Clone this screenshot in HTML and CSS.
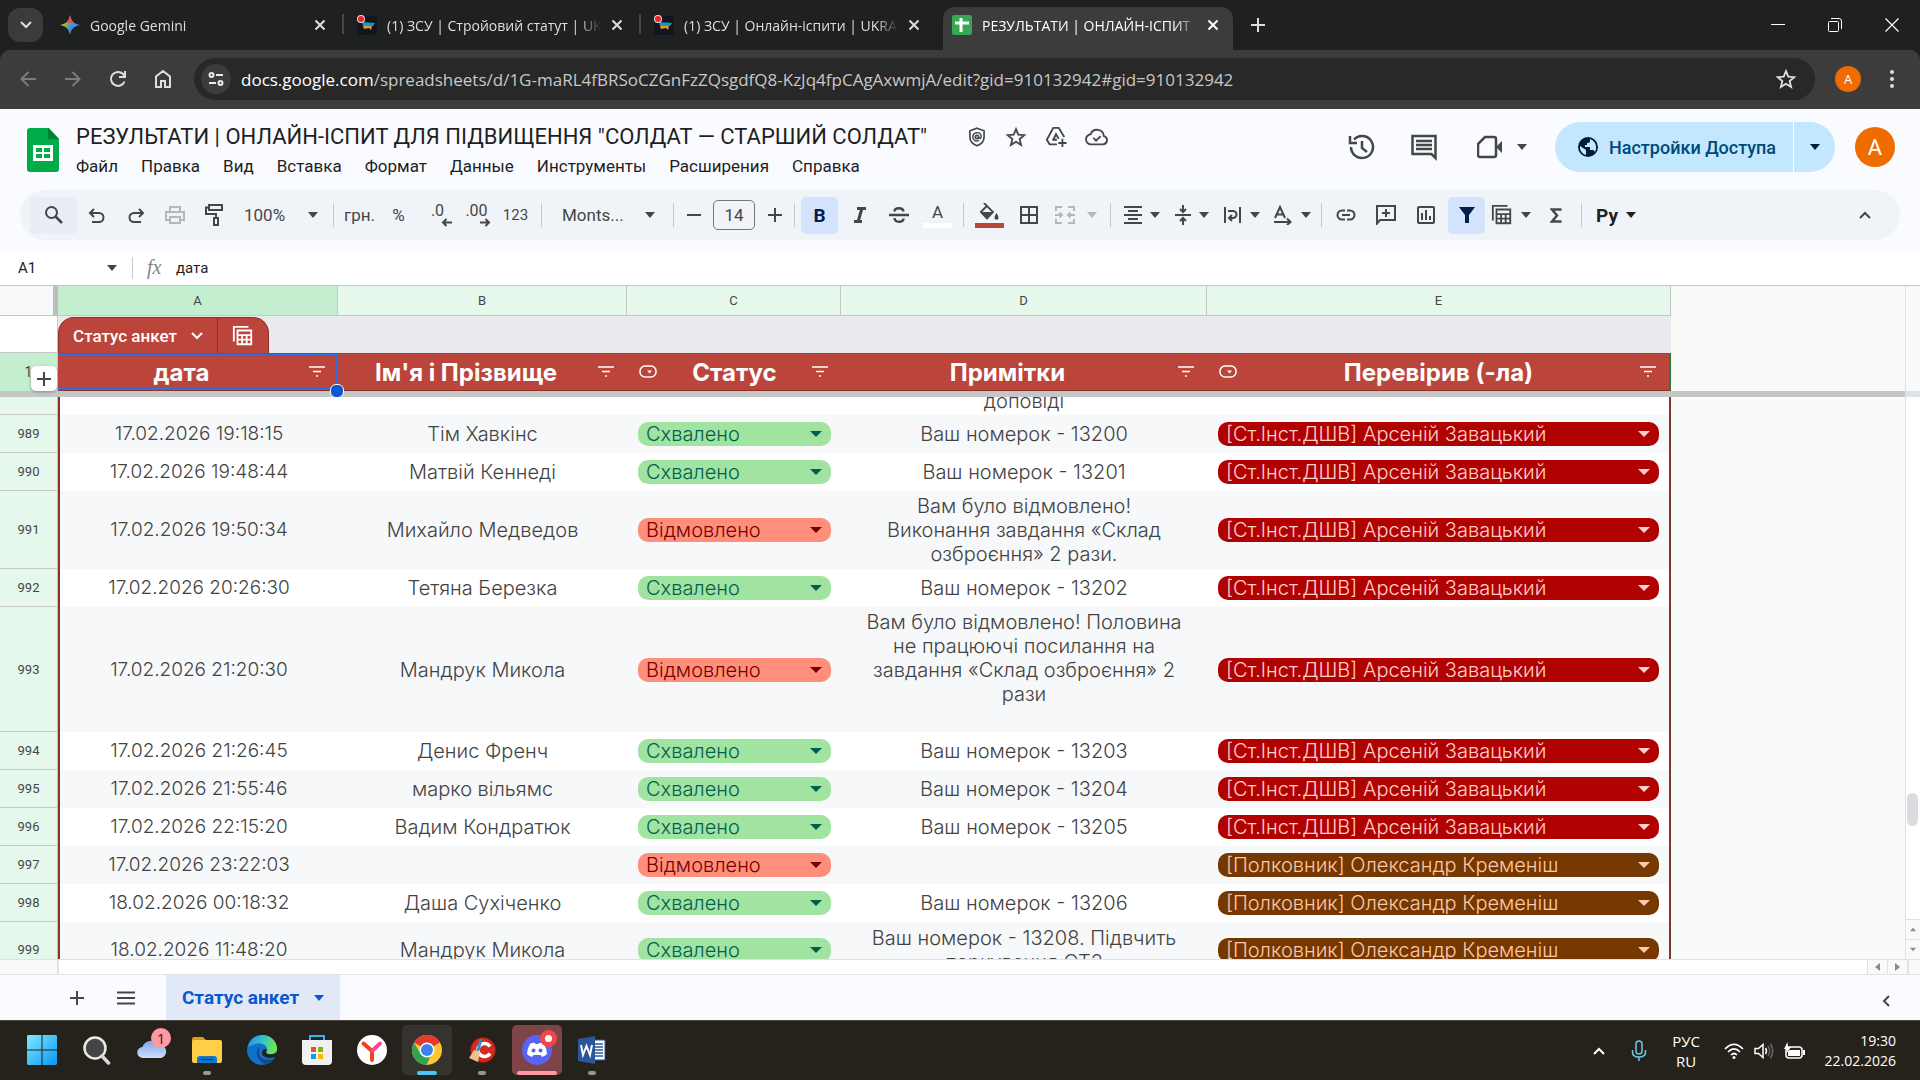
FILE: index.html
```html
<!DOCTYPE html>
<html lang="uk">
  <head>
    <meta charset="UTF-8" />
    <meta name="viewport" content="width=device-width, initial-scale=1.0" />
    <title>РЕЗУЛЬТАТИ | ОНЛАЙН-ІСПИТ</title>
    <link rel="stylesheet" href="styles.css" />
  </head>
  <body>
    <svg class="sprite" aria-hidden="true">
      <symbol id="i-close" viewBox="0 0 12 12"><path d="M1.500 1.500l9 9M10.500 1.500l-9 9" fill="none" stroke="currentColor" stroke-width="2" /></symbol>
      <symbol id="i-plus" viewBox="0 0 14 14"><path d="M7 0v14M0 7h14" fill="none" stroke="currentColor" stroke-width="2" /></symbol>
      <symbol id="i-minus" viewBox="0 0 14 14"><path d="M0 7h14" fill="none" stroke="currentColor" stroke-width="2" /></symbol>
      <symbol id="i-down" viewBox="0 0 12 8"><path d="M1 1l5 5 5-5" fill="none" stroke="currentColor" stroke-width="2" /></symbol>
      <symbol id="i-caret" viewBox="0 0 10 6"><path d="M0 0h10L5 6z" fill="currentColor" /></symbol>
      <symbol id="i-star" viewBox="0 0 24 24"><path d="M12 3.500l2.500 6 6.500.5-5 4.300 1.600 6.400-5.600-3.500-5.600 3.500L8 14.300 3 10l6.500-.5z" fill="none" stroke="currentColor" stroke-width="2" /></symbol>
      <symbol id="i-filter" viewBox="0 0 16 12"><path d="M0 1h16M4 5.500h8M7 10h2" fill="none" stroke="currentColor" stroke-width="1.500" /></symbol>
      <symbol id="i-chip" viewBox="0 0 18 14"><rect x="1" y="1" width="16" height="11" rx="5" fill="none" stroke="currentColor" stroke-width="1.500" /><path d="M8 5.500h5L10.500 8.500z" fill="currentColor" /></symbol>
      <symbol id="i-table" viewBox="0 0 24 24"><path d="M2 18V2h16M6 6h15v15H6zM6 11h15M6 16h15M11 11v10M16 11v10" fill="none" stroke="currentColor" stroke-width="2" /></symbol>
      <symbol id="i-emblem" viewBox="0 0 20 20"><rect y="1" width="20" height="19" rx="3" fill="#14161f" /><path d="M5 7l13 1-2 3H6z" fill="#1597cf" /><path d="M6 11h9l-1 4-2-2-5 1z" fill="#e09a1c" /><circle cx="4" cy="4" r="4" fill="#f3d4d2" /><circle cx="4" cy="4" r="3" fill="#e5252a" /></symbol>
    </svg>

    <header class="browser">
      <div class="tabstrip">
        <button class="tab-search" aria-label="Пошук вкладок"><svg width="12" height="8"><use href="#i-down" /></svg></button>
        <div class="tab">
          <svg width="20" height="20" viewBox="0 0 20 20"><defs><linearGradient id="gem" x1="0" y1="0.300" x2="1" y2="0.600"><stop offset="0.100" stop-color="#f6bc05" /><stop offset="0.400" stop-color="#5db86b" /><stop offset="0.600" stop-color="#3f8cf5" /></linearGradient></defs><path d="M10 0c1 6 4 9 10 10-6 1-9 4-10 10-1-6-4-9-10-10 6-1 9-4 10-10z" fill="url(#gem)" /><path d="M10 0c.5 4 2 6 4 7.500L8 8 6.500 7C9 5 9.500 3 10 0z" fill="#ea4e55" /></svg>
          <span class="tab-name">Google Gemini</span>
          <button aria-label="Закрити"><svg width="12" height="12"><use href="#i-close" /></svg></button>
        </div>
        <div class="tab divided">
          <svg width="20" height="20"><use href="#i-emblem" /></svg>
          <span class="tab-name">(1) ЗСУ | Стройовий статут | UKRAINE</span>
          <button aria-label="Закрити"><svg width="12" height="12"><use href="#i-close" /></svg></button>
        </div>
        <div class="tab divided">
          <svg width="20" height="20"><use href="#i-emblem" /></svg>
          <span class="tab-name">(1) ЗСУ | Онлайн-іспити | UKRAINE</span>
          <button aria-label="Закрити"><svg width="12" height="12"><use href="#i-close" /></svg></button>
        </div>
        <div class="tab current">
          <svg width="20" height="20" viewBox="0 0 20 20"><rect width="20" height="20" rx="2" fill="#34a853" /><path d="M9 3v14M3 8h14" stroke="#fff" stroke-width="3" /></svg>
          <span class="tab-name">РЕЗУЛЬТАТИ | ОНЛАЙН-ІСПИТ</span>
          <button aria-label="Закрити"><svg width="12" height="12"><use href="#i-close" /></svg></button>
        </div>
        <button class="new-tab" aria-label="Нова вкладка"><svg width="14" height="14"><use href="#i-plus" /></svg></button>
        <div class="window-controls">
          <button aria-label="Згорнути"><svg width="14" height="14" viewBox="0 0 14 14"><path d="M0 6.500h14" stroke="#fff" /></svg></button>
          <button aria-label="Відновити"><svg width="14" height="14" viewBox="0 0 14 14" fill="none" stroke="#fff"><rect x="0.500" y="3.500" width="10" height="10" rx="1" /><path d="M3 .5h8q2.500 0 2.500 2.500v8" /></svg></button>
          <button aria-label="Закрити вікно"><svg width="14" height="14" viewBox="0 0 14 14"><path d="M.5.5l13 13M13.500.5l-13 13" stroke="#fff" stroke-width="1.200" /></svg></button>
        </div>
      </div>
      <div class="navbar">
        <button class="off" aria-label="Назад"><svg width="18" height="18" viewBox="0 0 18 18"><path d="M17 9H3M9.500 2L2.500 9l7 7" fill="none" stroke="currentColor" stroke-width="2" /></svg></button>
        <button class="off" aria-label="Вперед"><svg width="18" height="18" viewBox="0 0 18 18"><path d="M1 9h14M8.500 2l7 7-7 7" fill="none" stroke="currentColor" stroke-width="2" /></svg></button>
        <button aria-label="Оновити"><svg width="18" height="18" viewBox="0 0 18 18"><path d="M15.500 11.500A7 7 0 1 1 14 4l2 2M16 1v6h-6" fill="none" stroke="currentColor" stroke-width="2" /></svg></button>
        <button aria-label="Додому"><svg width="18" height="18" viewBox="0 0 18 18"><path d="M2 17V6.500L9 1l7 5.500V17h-5v-6H7v6z" fill="none" stroke="currentColor" stroke-width="2" /></svg></button>
        <div class="omnibox">
          <button class="site-info" aria-label="Дані сайту"><svg width="16" height="16" viewBox="0 0 16 16" fill="none" stroke="#e8e8e8" stroke-width="2"><circle cx="3.500" cy="4" r="2" /><path d="M8 4h7M1 12h7" /><circle cx="12.500" cy="12" r="2" /></svg></button>
          <p class="url"><b>docs.google.com</b>/spreadsheets/d/1G-maRL4fBRSoCZGnFzZQsgdfQ8-KzJq4fpCAgAxwmjA/edit?gid=910132942#gid=910132942</p>
          <button class="bookmark" aria-label="Закладка"><svg width="22" height="22"><use href="#i-star" /></svg></button>
        </div>
        <button class="profile" aria-label="Профіль">A</button>
        <button class="more" aria-label="Меню"><svg width="4" height="18" viewBox="0 0 4 18" fill="currentColor"><circle cx="2" cy="2" r="2" /><circle cx="2" cy="9" r="2" /><circle cx="2" cy="16" r="2" /></svg></button>
      </div>
    </header>

    <section class="doc-head">
      <svg class="logo" width="32" height="44" viewBox="0 0 32 44"><path d="M3 0h19l10 11v30q0 3-3 3H3q-3 0-3-3V3q0-3 3-3z" fill="#00ac47" /><path d="M21 0l11 11H21z" fill="#00832d" /><path d="M6 17h20v16H6zM9 20v4h6v-4zM17 20v4h6v-4zM9 26v4h6v-4zM17 26v4h6v-4z" fill="#fff" fill-rule="evenodd" /></svg>
      <div class="doc-info">
        <div class="doc-title">
          <h1>РЕЗУЛЬТАТИ | ОНЛАЙН-ІСПИТ ДЛЯ ПІДВИЩЕННЯ "СОЛДАТ — СТАРШИЙ СОЛДАТ"</h1>
          <svg width="20" height="20" viewBox="0 0 24 24" fill="none" stroke="currentColor" stroke-width="2"><path d="M12 1.500l8.500 3V12c0 5-3 8.500-8.500 10.500C6.500 20.500 3.500 17 3.500 12V4.500z" /><circle cx="12" cy="12" r="2" /><path d="M14 12c0 3 3.500 2 3-1-1-6-10-5.500-10 1 0 4 4 6 7.500 4" stroke-width="1.700" /></svg>
          <svg width="22" height="22"><use href="#i-star" /></svg>
          <svg width="22" height="22" viewBox="0 0 24 24" fill="none" stroke="currentColor" stroke-width="2"><path d="M13 20H5l-3-5L9 2h6l6 10M9 15l3-6 3 5M8 15h5M19 14v9M14.500 18.500h9" /></svg>
          <svg width="24" height="22" viewBox="0 0 26 24" fill="none" stroke="currentColor" stroke-width="2"><path d="M7 20a5.500 5.500 0 0 1-1-11 7.500 7.500 0 0 1 14.500 2A4.600 4.600 0 0 1 20 20zM9 13l3 3 5-5" /></svg>
        </div>
        <nav class="menu">
          <a href="#">Файл</a><a href="#">Правка</a><a href="#">Вид</a><a href="#">Вставка</a><a href="#">Формат</a><a href="#">Данные</a><a href="#">Инструменты</a><a href="#">Расширения</a><a href="#">Справка</a>
        </nav>
      </div>
      <div class="doc-actions">
        <button aria-label="История"><svg width="28" height="28" viewBox="0 0 28 28" fill="none" stroke="currentColor" stroke-width="2.500"><path d="M3 14A11 11 0 1 0 6 6.500M2 3v7h7M14 8v7l5 4" /></svg></button>
        <button aria-label="Комментарии"><svg width="28" height="28" viewBox="0 0 28 28" fill="none" stroke="currentColor" stroke-width="2.500"><path d="M2.500 3h23v22l-4-4h-19z" /><path d="M6 8h16M6 12h16M6 16h16" /></svg></button>
        <button class="meet" aria-label="Встреча"><svg width="26" height="24" viewBox="0 0 26 24" fill="none" stroke="currentColor" stroke-width="2.500"><path d="M8 2h9q2 0 2 2v16q0 2-2 2H3q-2 0-2-2V9z" /><path d="M19 12l6-6v12z" fill="currentColor" stroke="none" /></svg><svg width="10" height="6"><use href="#i-caret" /></svg></button>
      </div>
      <div class="share">
        <button class="share-main"><svg width="20" height="20" viewBox="0 0 20 20"><circle cx="10" cy="10" r="10" fill="#001d35" /><path d="M2 9l6 4v5C4 17 1.500 13 2 9zM12 2v2q0 2-3 2v2H7v2h5v3h3q1 0 2 2c2.500-5 1-11-5-13z" fill="#c2e7ff" /></svg>Настройки Доступа</button>
        <button class="share-more" aria-label="Ещё"><svg width="10" height="6"><use href="#i-caret" /></svg></button>
      </div>
      <button class="account" aria-label="Аккаунт">A</button>
    </section>

    <section class="toolbar" aria-label="Панель инструментов">
      <button class="find" aria-label="Поиск"><svg width="20" height="20" viewBox="0 0 20 20"><circle cx="7.500" cy="7.500" r="5.500" fill="none" stroke="currentColor" stroke-width="2" /><path d="M11.500 11.500L18 18" stroke="currentColor" stroke-width="2.500" /></svg></button>
      <button class="tool" aria-label="Отменить"><svg width="18" height="18" viewBox="0 0 18 18" fill="none" stroke="currentColor" stroke-width="2"><path d="M6 3L2 7l4 4M2 7h9a4.500 4.500 0 0 1 0 9H4" /></svg></button>
      <button class="tool" aria-label="Повторить"><svg width="18" height="18" viewBox="0 0 18 18" fill="none" stroke="currentColor" stroke-width="2"><path d="M12 3l4 4-4 4M16 7H7a4.500 4.500 0 0 0 0 9h7" /></svg></button>
      <button class="tool pale" aria-label="Печать"><svg width="20" height="20" viewBox="0 0 20 20" fill="none" stroke="currentColor" stroke-width="2"><path d="M5 6V2h10v4M5 15H1V7h18v8h-4M5 12h10v6H5z" /></svg></button>
      <button class="tool" aria-label="Копировать форматирование"><svg width="18" height="22" viewBox="0 0 18 22" fill="none" stroke="currentColor" stroke-width="2"><path d="M4 1h13v5H4zM4 3.500H1V10h10v4M9 14h4v7H9z" /></svg></button>
      <button class="wide zoom">100%<svg width="10" height="6"><use href="#i-caret" /></svg></button>
      <span class="bar"></span>
      <button class="tool">грн.</button>
      <button class="tool">%</button>
      <button class="tool decimals">.0<svg width="11" height="9" viewBox="0 0 11 9"><path d="M11 4.500H2M5.500 1L2 4.500 5.500 8" fill="none" stroke="currentColor" stroke-width="2" /></svg></button>
      <button class="tool decimals">.00<svg width="11" height="9" viewBox="0 0 11 9"><path d="M0 4.500h9M5.500 1L9 4.500 5.500 8" fill="none" stroke="currentColor" stroke-width="2" /></svg></button>
      <button class="tool small">123</button>
      <span class="bar"></span>
      <button class="wide font">Monts...<svg width="10" height="6"><use href="#i-caret" /></svg></button>
      <span class="bar"></span>
      <button class="step" aria-label="Уменьшить"><svg width="14" height="14"><use href="#i-minus" /></svg></button>
      <input class="size" type="text" value="14" aria-label="Размер шрифта" />
      <button class="step" aria-label="Увеличить"><svg width="14" height="14"><use href="#i-plus" /></svg></button>
      <span class="bar"></span>
      <button class="tool on bold">B</button>
      <button class="tool" aria-label="Курсив"><svg width="14" height="16" viewBox="0 0 14 16"><path d="M4 1.500h9M1 14.500h8M9 1L5 15" fill="none" stroke="currentColor" stroke-width="3" /></svg></button>
      <button class="tool" aria-label="Зачеркнутый"><svg width="20" height="18" viewBox="0 0 20 18" fill="none" stroke="currentColor" stroke-width="2.500"><path d="M0 9h20M14.500 5.500C14 1 5.500 1 5.500 5.500M5.500 12c.5 5 9 5 9 .5" /></svg></button>
      <button class="tool swatch">A<i></i></button>
      <span class="bar"></span>
      <button class="tool swatch fill" aria-label="Цвет заливки"><svg width="20" height="18" viewBox="0 0 20 18"><path d="M4 0l9 9-6 6.500L.8 9l6-6" fill="none" stroke="currentColor" stroke-width="1.800" /><path d="M1 9h12l-6 6.500zM16.500 10q3 4 1.500 6.500h-3Q13.500 14 16.500 10z" fill="currentColor" /></svg><i></i></button>
      <button class="tool" aria-label="Границы"><svg width="18" height="18" viewBox="0 0 18 18" fill="none" stroke="currentColor" stroke-width="2"><path d="M1 1h16v16H1zM9 1v16M1 9h16" /></svg></button>
      <button class="drop merge pale" aria-label="Объединить"><svg width="20" height="18" viewBox="0 0 20 18" fill="none" stroke="currentColor" stroke-width="2"><path d="M7 1H1v4M13 1h6v4M7 17H1v-4M13 17h6v-4M0 9h7M4.500 6.500L7 9l-2.500 2.500M20 9h-7M15.500 6.500L13 9l2.500 2.500" /></svg><svg width="10" height="6"><use href="#i-caret" /></svg></button>
      <span class="bar"></span>
      <button class="drop" aria-label="Выравнивание"><svg width="18" height="18" viewBox="0 0 18 18" stroke="currentColor" stroke-width="2"><path d="M0 1h18M4 5h10M0 9h18M4 13h10M0 17h18" /></svg><svg width="10" height="6"><use href="#i-caret" /></svg></button>
      <button class="drop" aria-label="По вертикали"><svg width="16" height="20" viewBox="0 0 16 20" fill="none" stroke="currentColor" stroke-width="2"><path d="M0 10h16M8 0v6M5 4l3 3 3-3M8 20v-6M5 16l3-3 3 3" /></svg><svg width="10" height="6"><use href="#i-caret" /></svg></button>
      <button class="drop" aria-label="Перенос"><svg width="18" height="18" viewBox="0 0 18 18" fill="none" stroke="currentColor" stroke-width="2"><path d="M1 1v16M16 1v16M4 5h5a3.500 3.500 0 0 1 0 7H5M8 9l-3 3 3 3" /></svg><svg width="10" height="6"><use href="#i-caret" /></svg></button>
      <button class="drop" aria-label="Поворот"><svg width="20" height="20" viewBox="0 0 20 20" fill="none" stroke="currentColor" stroke-width="2"><path d="M2 13L7 2l5 11M4 9.500h6M1 17h16M14 13.500l3.500 3.500-3.500 3" /></svg><svg width="10" height="6"><use href="#i-caret" /></svg></button>
      <span class="bar tight"></span>
      <button class="insert" aria-label="Ссылка"><svg width="20" height="12" viewBox="0 0 20 12" fill="none" stroke="currentColor" stroke-width="2"><path d="M9 1.500H6a4.500 4.500 0 0 0 0 9h3M11 1.500h3a4.500 4.500 0 0 1 0 9h-3M6 6h8" /></svg></button>
      <button class="insert" aria-label="Комментарий"><svg width="20" height="20" viewBox="0 0 20 20" fill="none" stroke="currentColor" stroke-width="2"><path d="M1 18.500V1h18v14H4zM10 4v8M6 8h8" /></svg></button>
      <button class="insert" aria-label="Диаграмма"><svg width="18" height="18" viewBox="0 0 18 18" fill="none" stroke="currentColor" stroke-width="2"><rect x="1" y="1" width="16" height="16" rx="1" /><path d="M5 7v7M9 4v10M13 10v4" /></svg></button>
      <button class="insert on" aria-label="Фильтр"><svg width="16" height="16" viewBox="0 0 16 16"><path d="M0 0h16l-6 8v8H6V8z" fill="#041e49" /></svg></button>
      <button class="drop" aria-label="Таблицы"><svg width="22" height="22"><use href="#i-table" /></svg><svg width="10" height="6"><use href="#i-caret" /></svg></button>
      <button class="tool" aria-label="Функции"><svg width="12" height="15" viewBox="0 0 12 15"><path d="M11.500 1.500H2l5 6-5 6h9.500" fill="none" stroke="currentColor" stroke-width="2.500" /></svg></button>
      <span class="bar"></span>
      <button class="drop py">Py<svg width="10" height="6"><use href="#i-caret" /></svg></button>
      <button class="collapse" aria-label="Свернуть"><svg class="flip" width="12" height="8"><use href="#i-down" /></svg></button>
    </section>

    <section class="formula">
      <button class="name-box">A1<svg width="10" height="6"><use href="#i-caret" /></svg></button>
      <label class="fx" for="fx">fx</label>
      <input id="fx" type="text" value="дата" />
    </section>

    <main class="sheet">
      <div class="grid">
        <table>
          <colgroup>
            <col class="c-num" /><col class="c-a" /><col class="c-b" /><col class="c-c" /><col class="c-d" /><col class="c-e" /><col />
          </colgroup>
          <thead>
            <tr class="letters">
              <td class="corner"></td><th class="picked">A</th><th>B</th><th>C</th><th>D</th><th>E</th><td></td>
            </tr>
            <tr class="band">
              <td class="num"></td>
              <td colspan="5">
                <div class="table-tab">
                  <button>Статус анкет<svg width="12" height="8"><use href="#i-down" /></svg></button>
                  <button aria-label="Таблица"><svg width="22" height="22"><use href="#i-table" /></svg></button>
                </div>
              </td>
              <td></td>
            </tr>
            <tr class="titles">
              <th class="num">1<button class="add-row" aria-label="Добавить"><svg width="14" height="14"><use href="#i-plus" /></svg></button></th>
              <th class="selected"><div><span>дата</span><svg width="16" height="12"><use href="#i-filter" /></svg></div></th>
              <th><div><span>Ім'я і Прізвище</span><svg width="16" height="12"><use href="#i-filter" /></svg></div></th>
              <th><div><svg width="18" height="14"><use href="#i-chip" /></svg><span>Статус</span><svg width="16" height="12"><use href="#i-filter" /></svg></div></th>
              <th><div><span>Примітки</span><svg width="16" height="12"><use href="#i-filter" /></svg></div></th>
              <th><div><svg width="18" height="14"><use href="#i-chip" /></svg><span>Перевірив (-ла)</span><svg width="16" height="12"><use href="#i-filter" /></svg></div></th>
              <td></td>
            </tr>
            <tr class="freeze"><td colspan="7"></td></tr>
          </thead>
          <tbody>
            <tr class="cut">
              <th></th><td></td><td></td><td></td><td><div>доповіді</div></td><td></td><td></td>
            </tr>
            <tr>
              <th>989</th><td>17.02.2026 19:18:15</td><td>Тім Хавкінс</td>
              <td><label class="chip ok"><select aria-label="Статус"><option>Схвалено</option><option>Відмовлено</option></select></label></td>
              <td>Ваш номерок - 13200</td>
              <td><label class="chip inst"><select aria-label="Перевірив"><option>[Ст.Інст.ДШВ] Арсеній Завацький</option></select></label></td><td></td>
            </tr>
            <tr>
              <th>990</th><td>17.02.2026 19:48:44</td><td>Матвій Кеннеді</td>
              <td><label class="chip ok"><select aria-label="Статус"><option>Схвалено</option><option>Відмовлено</option></select></label></td>
              <td>Ваш номерок - 13201</td>
              <td><label class="chip inst"><select aria-label="Перевірив"><option>[Ст.Інст.ДШВ] Арсеній Завацький</option></select></label></td><td></td>
            </tr>
            <tr class="lines-3">
              <th>991</th><td>17.02.2026 19:50:34</td><td>Михайло Медведов</td>
              <td><label class="chip no"><select aria-label="Статус"><option>Відмовлено</option><option>Схвалено</option></select></label></td>
              <td>Вам було відмовлено!<br />Виконання завдання «Склад<br />озброєння» 2 рази.</td>
              <td><label class="chip inst"><select aria-label="Перевірив"><option>[Ст.Інст.ДШВ] Арсеній Завацький</option></select></label></td><td></td>
            </tr>
            <tr>
              <th>992</th><td>17.02.2026 20:26:30</td><td>Тетяна Березка</td>
              <td><label class="chip ok"><select aria-label="Статус"><option>Схвалено</option><option>Відмовлено</option></select></label></td>
              <td>Ваш номерок - 13202</td>
              <td><label class="chip inst"><select aria-label="Перевірив"><option>[Ст.Інст.ДШВ] Арсеній Завацький</option></select></label></td><td></td>
            </tr>
            <tr class="lines-5">
              <th>993</th><td>17.02.2026 21:20:30</td><td>Мандрук Микола</td>
              <td><label class="chip no"><select aria-label="Статус"><option>Відмовлено</option><option>Схвалено</option></select></label></td>
              <td>Вам було відмовлено! Половина<br />не працюючі посилання на<br />завдання «Склад озброєння» 2<br />рази<br /><br /></td>
              <td><label class="chip inst"><select aria-label="Перевірив"><option>[Ст.Інст.ДШВ] Арсеній Завацький</option></select></label></td><td></td>
            </tr>
            <tr>
              <th>994</th><td>17.02.2026 21:26:45</td><td>Денис Френч</td>
              <td><label class="chip ok"><select aria-label="Статус"><option>Схвалено</option><option>Відмовлено</option></select></label></td>
              <td>Ваш номерок - 13203</td>
              <td><label class="chip inst"><select aria-label="Перевірив"><option>[Ст.Інст.ДШВ] Арсеній Завацький</option></select></label></td><td></td>
            </tr>
            <tr>
              <th>995</th><td>17.02.2026 21:55:46</td><td>марко вільямс</td>
              <td><label class="chip ok"><select aria-label="Статус"><option>Схвалено</option><option>Відмовлено</option></select></label></td>
              <td>Ваш номерок - 13204</td>
              <td><label class="chip inst"><select aria-label="Перевірив"><option>[Ст.Інст.ДШВ] Арсеній Завацький</option></select></label></td><td></td>
            </tr>
            <tr>
              <th>996</th><td>17.02.2026 22:15:20</td><td>Вадим Кондратюк</td>
              <td><label class="chip ok"><select aria-label="Статус"><option>Схвалено</option><option>Відмовлено</option></select></label></td>
              <td>Ваш номерок - 13205</td>
              <td><label class="chip inst"><select aria-label="Перевірив"><option>[Ст.Інст.ДШВ] Арсеній Завацький</option></select></label></td><td></td>
            </tr>
            <tr>
              <th>997</th><td>17.02.2026 23:22:03</td><td></td>
              <td><label class="chip no"><select aria-label="Статус"><option>Відмовлено</option><option>Схвалено</option></select></label></td>
              <td></td>
              <td><label class="chip col"><select aria-label="Перевірив"><option>[Полковник] Олександр Кременіш</option></select></label></td><td></td>
            </tr>
            <tr>
              <th>998</th><td>18.02.2026 00:18:32</td><td>Даша Сухіченко</td>
              <td><label class="chip ok"><select aria-label="Статус"><option>Схвалено</option><option>Відмовлено</option></select></label></td>
              <td>Ваш номерок - 13206</td>
              <td><label class="chip col"><select aria-label="Перевірив"><option>[Полковник] Олександр Кременіш</option></select></label></td><td></td>
            </tr>
            <tr class="lines-2">
              <th>999</th><td>18.02.2026 11:48:20</td><td>Мандрук Микола</td>
              <td><label class="chip ok"><select aria-label="Статус"><option>Схвалено</option><option>Відмовлено</option></select></label></td>
              <td>Ваш номерок - 13208. Підвчить<br />паркування ОТЗ</td>
              <td><label class="chip col"><select aria-label="Перевірив"><option>[Полковник] Олександр Кременіш</option></select></label></td><td></td>
            </tr>
          </tbody>
        </table>
      </div>
      <div class="vscroll">
        <span class="frozen-part"></span>
        <span class="thumb"></span>
        <button aria-label="Вверх"><svg class="flip" width="6" height="5"><use href="#i-caret" /></svg></button>
        <button aria-label="Вниз"><svg width="6" height="5"><use href="#i-caret" /></svg></button>
      </div>
    </main>
    <div class="hscroll">
      <span class="stub"></span>
      <button aria-label="Влево"><svg width="5" height="8" viewBox="0 0 5 8"><path d="M5 0v8L0 4z" fill="#8a8a8a" /></svg></button>
      <button aria-label="Вправо"><svg width="5" height="8" viewBox="0 0 5 8"><path d="M0 0v8l5-4z" fill="#8a8a8a" /></svg></button>
      <span class="end"></span>
    </div>

    <footer class="sheet-tabs">
      <button aria-label="Добавить лист"><svg width="14" height="14"><use href="#i-plus" /></svg></button>
      <button aria-label="Все листы"><svg width="18" height="14" viewBox="0 0 18 14"><path d="M0 1.500h18M0 7h18M0 12.500h18" stroke="currentColor" stroke-width="2" /></svg></button>
      <button class="sheet-tab">Статус анкет<svg width="10" height="6"><use href="#i-caret" /></svg></button>
      <button class="side" aria-label="Панель"><svg width="8" height="12" viewBox="0 0 8 12"><path d="M7 1L2 6l5 5" fill="none" stroke="currentColor" stroke-width="2" /></svg></button>
    </footer>

    <footer class="taskbar">
      <button aria-label="Пуск"><svg width="30" height="30" viewBox="0 0 30 30"><defs><linearGradient id="win" x1="0" y1="0" x2="1" y2="1"><stop offset="0" stop-color="#7eebff" /><stop offset="1" stop-color="#0a95f5" /></linearGradient></defs><path d="M1 0h13.500v14.500H0V1zM15.500 0H29l1 1v13.500H15.500zM0 15.500h14.500V30H1l-1-1zM15.500 15.500H30V29l-1 1H15.500z" fill="url(#win)" /></svg></button>
      <button aria-label="Поиск"><svg width="30" height="30" viewBox="0 0 30 30"><circle cx="13" cy="13" r="10.500" fill="#454545" stroke="#e9e9e9" stroke-width="2.500" /><path d="M20 21l6.500 7" stroke="#d8d8d8" stroke-width="3.500" stroke-linecap="round" /></svg></button>
      <button aria-label="Погода"><svg width="34" height="30" viewBox="0 0 34 30"><defs><linearGradient id="sky" x1="0" y1="0" x2="0" y2="1"><stop offset="0" stop-color="#7fa6ea" /><stop offset="1" stop-color="#cddffb" /></linearGradient></defs><path d="M8 23a5.500 5.500 0 0 1-.5-11A8.500 8.500 0 0 1 23 10a6.500 6.500 0 0 1 3 13z" fill="url(#sky)" /></svg><em>1</em></button>
      <button class="running" aria-label="Проводник"><svg width="30" height="30" viewBox="0 0 30 30"><path d="M0 4q0-2 2-2h9l3 3h14v10H0z" fill="#dd9c12" /><rect y="5" width="30" height="23" rx="2" fill="#ffcf48" /><path d="M5 28v-4q0-3 3-3h14q3 0 3 3v4z" fill="#1179cc" /><path d="M9 24.500h12" stroke="#06437d" stroke-width="1.500" /></svg></button>
      <button aria-label="Edge"><svg width="30" height="30" viewBox="0 0 30 30"><defs><linearGradient id="edge" x1="0" y1="0" x2="1" y2="0.300"><stop offset="0" stop-color="#1d8fd8" /><stop offset="0.500" stop-color="#32bfd5" /><stop offset="1" stop-color="#6be54f" /></linearGradient></defs><circle cx="15" cy="15" r="15" fill="#1172cc" /><path d="M1 12C4-4 27-4 30 12c1 6-4 8-9 7-3-1-2-2-1-4 1-5-7-8-12-6-3 1-5 2-7 3z" fill="url(#edge)" /><path d="M12 12c-5 5-1 16 7 17 5-1 8-4 9-6-7 4-16 1-16-5 0-2 1-4 0-6z" fill="#134a8c" /><path d="M20 15q-2 3 1 4 4 1 8-1l1 0v4h-2q-5 2-10 0-5-3-2-7 2-2 4 0z" fill="#25221c" /></svg></button>
      <button aria-label="Store"><svg width="30" height="30" viewBox="0 0 30 30"><path d="M8 7V1h14v6" fill="none" stroke="#2cb8ef" stroke-width="2" /><path d="M0 5h30v21q0 4-4 4H4q-4 0-4-4z" fill="#f1f1f1" /><path d="M9 12h5v5H9z" fill="#f1511b" /><path d="M16 12h5v5h-5z" fill="#80bb01" /><path d="M9 19h5v5H9z" fill="#00a3ee" /><path d="M16 19h5v5h-5z" fill="#fbb900" /></svg></button>
      <button aria-label="Яндекс"><svg width="30" height="30" viewBox="0 0 30 30"><circle cx="15" cy="15" r="15" fill="#fff" /><path d="M6.500 8.500L15 16v9" fill="none" stroke="#f3401f" stroke-width="4" stroke-linecap="round" /><path d="M15.500 15.500l7.500-7" stroke="#fb4a8d" stroke-width="4" stroke-linecap="round" /></svg></button>
      <button class="active" aria-label="Chrome"><svg width="30" height="30" viewBox="0 0 30 30"><circle cx="15" cy="15" r="15" fill="#fcc531" /><path d="M15 15L2 7.500a15 15 0 0 1 26 0z" fill="#e53a2d" /><path d="M2 7.500L8.500 19 18 22l-3.500 8A15 15 0 0 1 2 7.500z" fill="#32a350" /><circle cx="15" cy="15" r="7.500" fill="#fff" /><circle cx="15" cy="15" r="6" fill="#3b82ee" /></svg></button>
      <button class="running" aria-label="CCleaner"><svg width="30" height="30" viewBox="0 0 30 30"><circle cx="16" cy="15" r="12.500" fill="#d32a20" stroke="#8f1710" /><path d="M23 11.500a6.500 6.500 0 1 0 0 7" fill="none" stroke="#fff" stroke-width="3.500" /><path d="M14 4l-3 12" stroke="#2a8fd0" stroke-width="3" /><path d="M7 15l6 2-2 10-9-4z" fill="#ecc28d" /></svg></button>
      <button class="alert" aria-label="Discord"><svg width="30" height="30" viewBox="0 0 30 30"><circle cx="15" cy="15" r="15" fill="#5865f2" /><path d="M8 9q3-2 5-1l.500 1h3l.500-1q3-.5 5 1 3 5 3 10-2 2-5 3l-1.500-2h-7L10 22q-3-1-5-3 0-5 3-10z" fill="#fff" /><circle cx="11.500" cy="15.500" r="2" fill="#5865f2" /><circle cx="18.500" cy="15.500" r="2" fill="#5865f2" /></svg><em></em></button>
      <button class="running" aria-label="Word"><svg width="30" height="30" viewBox="0 0 30 30"><path d="M15 5h13v20H15z" fill="#fff" stroke="#2b579a" /><path d="M17 9h9M17 12h9M17 15h9M17 18h9M17 21h9" stroke="#2b579a" stroke-width="1.500" /><path d="M1 4l17-3v28L1 26z" fill="#2b579a" /><path d="M4 10l2 10 3.500-9L13 20l2-10" fill="none" stroke="#fff" stroke-width="2" /></svg></button>
      <div class="tray">
        <svg class="flip" width="14" height="8"><use href="#i-down" /></svg>
        <svg class="mic" width="16" height="22" viewBox="0 0 16 22" fill="none" stroke="#6fc7e8" stroke-width="1.500"><rect x="5" y="1" width="6" height="13" rx="3" /><path d="M1.500 10v2q0 5 6.500 5t6.500-5v-2M8 17v4" /></svg>
        <p class="lang">РУС<br />RU</p>
        <svg width="20" height="18" viewBox="0 0 20 18" fill="none" stroke="#fff" stroke-width="1.700"><path d="M1 7q9-9 18 0M4 10q6-6 12 0M7 13q3-3 6 0" /><circle cx="10" cy="15.500" r="1.500" fill="#fff" stroke="none" /></svg>
        <svg width="20" height="18" viewBox="0 0 20 18" fill="none" stroke="#fff" stroke-width="1.500"><path d="M1 6.500h3.500L9 2.500v13l-4.500-4H1zM11.500 6q2 3 0 6" /><path d="M14 4q3.500 5 0 10M16.500 2q4.500 7 0 14" stroke="#666" /></svg>
        <svg width="22" height="18" viewBox="0 0 22 18"><rect x="2" y="5" width="16" height="11" rx="3" fill="none" stroke="#fff" stroke-width="1.500" /><path d="M4 8h12v6H4zM19 8h2v5h-2zM3.500 0L0 7h3l-1 5 5-7H4z" fill="#fff" /></svg>
        <p class="clock">19:30<br />22.02.2026</p>
      </div>
    </footer>
  </body>
</html>
```
FILE: styles.css
```css
* {
  box-sizing: border-box;
  margin: 0;
}
body {
  display: flex;
  flex-direction: column;
  height: 100vh;
  overflow: hidden;
  background: #f9fbff;
  color: #1f1f1f;
  font-family: Roboto, "Liberation Sans", sans-serif;
}
button,
input,
select {
  border: 0;
  padding: 0;
  background: none;
  color: inherit;
  font: inherit;
}
button {
  display: flex;
  align-items: center;
  justify-content: center;
}
svg {
  flex: none;
}
.sprite {
  position: absolute;
  width: 0;
  height: 0;
}
.flip {
  transform: rotate(180deg);
}

/* browser */
.browser {
  background: #1f2120;
  color: #dedede;
  font-family: "Open Sans", "Noto Sans", sans-serif;
}
.tabstrip {
  display: flex;
  height: 50px;
  padding-left: 8px;
}
.tab-search {
  width: 35px;
  height: 34px;
  margin: 8px 6px 0 0;
  border-radius: 12px;
  background: #3b3b3b;
}
.tab {
  position: relative;
  display: flex;
  align-items: center;
  width: 297px;
  padding: 0 14px 0 11px;
  font-size: 14px;
}
.tab.divided::before {
  content: "";
  position: absolute;
  left: -4px;
  top: 14px;
  width: 2px;
  height: 20px;
  background: #454746;
}
.tab-name {
  flex: 1;
  margin: 0 4px 0 10px;
  overflow: hidden;
  white-space: nowrap;
  mask-image: linear-gradient(90deg, #000 90%, transparent);
}
.tab button {
  width: 24px;
}
.tab.current {
  width: 290px;
  margin: 7px 0 0 3px;
  padding: 0 8px 7px 9px;
  border-radius: 12px 12px 0 0;
  background: #3c3c3c;
  color: #fff;
}
.new-tab {
  width: 50px;
}
.window-controls {
  display: flex;
  margin-left: auto;
}
.window-controls button {
  width: 57px;
}
.navbar {
  display: flex;
  align-items: center;
  height: 59px;
  padding: 0 13px 1px 5px;
  border-radius: 10px 10px 0 0;
  background: #3c3c3c;
}
.navbar > button {
  width: 45px;
  height: 40px;
}
.navbar .off {
  color: #7c7c7c;
}
.omnibox {
  flex: 1;
  display: flex;
  align-items: center;
  height: 42px;
  margin: 0 20px 0 9px;
  padding: 0 18px 0 7px;
  border-radius: 21px;
  background: #282828;
}
.site-info {
  width: 30px;
  height: 30px;
  border-radius: 15px;
  background: #3c3c3c;
}
.url {
  flex: 1;
  margin-left: 10px;
  font-size: 17px;
  white-space: nowrap;
  color: #c7c7c7;
}
.url b {
  font-weight: 400;
  color: #fff;
}
.navbar .profile {
  width: 26px;
  height: 26px;
  border-radius: 13px;
  background: #ef6c00;
  color: #fff;
  font-size: 13px;
}
.navbar .more {
  width: 30px;
  margin-left: 16px;
}

/* document header */
.doc-head {
  display: flex;
  align-items: center;
  height: 81px;
  padding: 0 25px 5px 27px;
  color: #444746;
}
.logo {
  margin-top: 6px;
}
.doc-info {
  flex: 1;
  margin: 7px 0 0 17px;
}
.doc-title {
  display: flex;
  align-items: center;
  gap: 18px;
  height: 30px;
}
h1 {
  margin-right: 22px;
  color: #1f1f1f;
  font-size: 22px;
  font-weight: 400;
  white-space: nowrap;
}
.menu {
  display: flex;
  gap: 23px;
  height: 28px;
  align-items: center;
}
.menu a {
  color: #1f1f1f;
  font-size: 17px;
  text-decoration: none;
}
.doc-actions {
  display: flex;
  gap: 34px;
  margin-right: 28px;
}
.meet {
  gap: 14px;
  margin-left: 5px;
}
.share {
  display: flex;
  height: 50px;
  border-radius: 25px;
  background: #c2e7ff;
  overflow: hidden;
}
.share-main {
  justify-content: flex-start;
  gap: 11px;
  width: 239px;
  padding-left: 23px;
  border-right: 1px solid #fff;
  color: #004a77;
  font-size: 18px;
  font-weight: 500;
}
.share-more {
  width: 41px;
  color: #001d35;
}
.account {
  width: 40px;
  height: 40px;
  margin-left: 20px;
  border-radius: 20px;
  background: #ef6c00;
  color: #fff;
  font-size: 22px;
}

/* toolbar */
.toolbar {
  display: flex;
  align-items: center;
  flex: none;
  height: 50px;
  margin: 0 20px 10px;
  padding-left: 10px;
  border-radius: 25px;
  background: #f0f4f9;
  color: #444746;
  font-size: 17px;
}
.toolbar button {
  height: 37px;
  flex: none;
}
.find {
  width: 47px;
  border-radius: 4px;
  background: #e8edf6;
}
.tool {
  width: 39px;
}
.tool.small {
  font-size: 15px;
}
.pale {
  color: #b4b8bb;
}
.bar {
  flex: none;
  width: 1px;
  height: 24px;
  margin: 0 6px;
  background: #c7c7c7;
}
.bar.tight {
  margin: 0 4px;
}
.toolbar .wide {
  justify-content: space-between;
  padding: 0 9px 0 11px;
}
.zoom {
  width: 94px;
}
.toolbar .font {
  width: 119px;
  padding: 0 12px 0 14px;
}
.toolbar .decimals {
  flex-direction: column;
  font-size: 16px;
  line-height: 14px;
}
.decimals svg {
  align-self: flex-end;
  margin-right: 5px;
}
.step {
  width: 27px;
}
.size {
  width: 42px;
  height: 30px;
  margin: 0 6px;
  border: 1px solid #747775;
  border-radius: 5px;
  text-align: center;
}
.tool.on {
  width: 37px;
  margin-right: 2px;
  border-radius: 5px;
  background: #d3e3fd;
  color: #041e49;
}
.bold {
  font-size: 19px;
  font-weight: 700;
}
.swatch {
  flex-direction: column;
  gap: 2px;
  line-height: 18px;
}
.swatch i {
  width: 29px;
  height: 5px;
  background: #fff;
}
.swatch.fill i {
  background: #bb453b;
}
.drop {
  width: 50px;
  gap: 8px;
}
.drop.merge {
  width: 56px;
  gap: 12px;
}
.insert {
  width: 40px;
}
.insert.on {
  width: 37px;
  margin: 0 1px 0 2px;
  border-radius: 5px;
  background: #d3e3fd;
}
.drop.py {
  width: 56px;
  color: #202124;
  font-size: 19px;
  font-weight: 700;
}
.collapse {
  width: 40px;
  margin: 0 15px 0 auto;
}

/* formula bar */
.formula {
  display: flex;
  align-items: center;
  flex: none;
  height: 35px;
  background: #fff;
  font-size: 15px;
}
.name-box {
  justify-content: space-between;
  width: 133px;
  height: 22px;
  padding: 0 15px 0 18px;
  border-right: 1px solid #c7c7c7;
}
.name-box svg {
  color: #444746;
}
.fx {
  width: 43px;
  padding-left: 14px;
  color: #80868b;
  font: italic 20px "Liberation Serif", serif;
}
.formula input {
  flex: 1;
}

/* grid */
.sheet {
  flex: 1;
  display: flex;
  min-height: 0;
  border-top: 1px solid #c4c7c5;
}
.grid {
  flex: 1;
  min-width: 0;
  overflow: hidden;
  background: #f8faf7;
}
table {
  width: 100%;
  table-layout: fixed;
  border-collapse: separate;
  border-spacing: 0;
}
th,
td {
  padding: 0;
  text-align: center;
}
.c-num {
  width: 58px;
}
.c-a {
  width: 280px;
}
.c-b {
  width: 289px;
}
.c-c {
  width: 214px;
}
.c-d {
  width: 366px;
}
.c-e {
  width: 464px;
}
.letters th {
  height: 30px;
  border: solid #c4c7c5;
  border-width: 0 1px 1px 0;
  background: #e6f7ec;
  color: #444746;
  font-size: 13px;
  font-weight: 400;
}
.letters .picked {
  background: #c4eed0;
}
.letters .corner {
  border-right: 5px solid #bdbdbd;
  border-bottom: 1px solid #c4c7c5;
  background: #f8f9fa;
}
.band td {
  height: 37px;
  padding: 0;
  vertical-align: bottom;
}
.band .num {
  border: solid #c4c7c5;
  border-width: 0 1px 1px 0;
  background: #fff;
}
.band td[colspan] {
  background: #e8eaed;
}
.table-tab {
  display: flex;
  width: 211px;
  height: 36px;
  border: 1px solid #8c3029;
  border-bottom: 0;
  border-radius: 16px 16px 0 0;
  background: #bb453b;
  color: #fff;
  overflow: hidden;
}
.table-tab button {
  flex: 1;
}
.table-tab button:first-child {
  flex: none;
  gap: 14px;
  width: 159px;
  border-right: 1px solid #8c3029;
  font-size: 17px;
  font-weight: 500;
}
.titles th {
  position: relative;
  height: 38px;
  border-top: 1px solid #2b7a41;
  border-bottom: 1px solid #8c3029;
  background: #bb453b;
  color: #fff;
  font: 700 24px/28px Inter, "Open Sans", sans-serif;
}
.titles th div {
  display: flex;
  align-items: center;
  justify-content: space-between;
  padding: 0 13px 0 12px;
}
.titles th span {
  flex: 1;
  padding: 2px 4px 0;
}
/* no chip icon on the left, so the name leans away from the filter */
.titles th span:first-child {
  margin-right: 16px;
}
.titles th:nth-of-type(6) {
  border-right: 2px solid #2b7a41;
}
.titles .num {
  border: 0;
  border-right: 1px solid #c4c7c5;
  background: #c4eed0;
  color: #444746;
  font: 400 14px Roboto, sans-serif;
}
.add-row {
  position: absolute;
  right: 0;
  bottom: 0;
  width: 26px;
  height: 25px;
  border-radius: 5px;
  background: #fff;
  box-shadow: 0 1px 3px #8a8a8a;
}
.titles .selected::before {
  content: "";
  position: absolute;
  inset: 0;
  border: solid #2f6fe4;
  border-width: 1px 2px 2px 0;
}
.titles .selected::after {
  content: "";
  position: absolute;
  right: -6px;
  bottom: -8px;
  z-index: 1;
  width: 12px;
  height: 12px;
  border: 1px solid #fff;
  border-radius: 6px;
  background: #0b57d0;
}
.freeze td {
  height: 6px;
  background: #c4c6c5;
}
tbody th {
  border: solid #c4c7c5;
  border-width: 0 1px 1px 0;
  background: #e6f7ec;
  color: #444746;
  font-size: 13px;
  font-weight: 400;
}
tbody td {
  height: 38px;
  background: #fff;
  color: #434343;
  font: 300 20px/24px Inter, "Open Sans", sans-serif;
  white-space: nowrap;
}
tbody tr:nth-child(even) td {
  background: #f6f8f9;
}
tbody td:nth-child(2) {
  border-left: 2px solid #8c3029;
  font-size: 19px;
}
tbody td:nth-child(6) {
  border-right: 2px solid #7a3a2c;
}
tbody tr td:last-child {
  background: #f8faf7;
}
tbody .cut td {
  height: 18px;
}
.cut div {
  display: flex;
  justify-content: center;
  align-items: flex-end;
  height: 18px;
  padding-bottom: 2px;
  overflow: hidden;
}
.lines-2 td {
  height: 55px;
}
.lines-3 td {
  height: 78px;
}
.lines-5 td {
  height: 125px;
}
.chip {
  position: relative;
  display: block;
  height: 24px;
  margin: 0 10px 0 11px;
  border-radius: 10px;
}
.chip select {
  display: block;
  width: 100%;
  height: 24px;
  padding-left: 8px;
  appearance: none;
}
.chip::after {
  content: "";
  position: absolute;
  right: 9px;
  top: 9px;
  border: 6px solid transparent;
  border-top-color: currentColor;
  border-bottom: 0;
}
.ok {
  background: #a1e3a1;
  color: #00604f;
}
.no {
  background: #ff8f7a;
  color: #750000;
}
.inst {
  background: #b10202;
  color: #ffcfc9;
}
.col {
  background: #753800;
  color: #ffc8aa;
}

/* scrollbars */
.vscroll {
  display: flex;
  flex-direction: column;
  width: 15px;
  border-left: 1px solid #e1e3e1;
  background: #fff;
}
.frozen-part {
  height: 111px;
  border-bottom: 6px solid #dde3ea;
  background: #f8f9fa;
}
.thumb {
  width: 11px;
  height: 33px;
  margin: auto 1px 93px;
  border-radius: 6px;
  background: #dadce0;
}
.vscroll button {
  height: 20px;
  border-top: 1px solid #e1e3e1;
  background: #f8f9fa;
  color: #8a8a8a;
}
.hscroll {
  display: flex;
  flex: none;
  height: 16px;
  border-top: 1px solid #e1e3e1;
  border-bottom: 1px solid #e1e3e1;
  background: #fff;
}
.hscroll .stub {
  width: 59px;
  margin-right: auto;
  border-right: 2px solid #e1e3e1;
  background: #f8f9fa;
}
.hscroll button {
  width: 20px;
  border-left: 1px solid #e1e3e1;
  background: #f8f9fa;
}
.hscroll .end {
  width: 13px;
  border-left: 2px solid #e1e3e1;
  background: #f8f9fa;
}

/* sheet tabs */
.sheet-tabs {
  display: flex;
  flex: none;
  height: 45px;
  padding-left: 52px;
  color: #444746;
}
.sheet-tabs button {
  width: 49px;
}
.sheet-tabs .sheet-tab {
  gap: 15px;
  width: 174px;
  margin-left: 16px;
  background: #e1e9f7;
  color: #0b57d0;
  font-size: 19px;
  font-weight: 700;
}
.sheet-tabs .side {
  margin: 6px 10px 0 auto;
}

/* taskbar */
.taskbar {
  display: flex;
  flex: none;
  height: 60px;
  padding-left: 17px;
  gap: 5px;
  border-top: 1px solid #4a4742;
  background: #25221c;
  color: #fff;
  font-family: "Open Sans", sans-serif;
}
.taskbar > button {
  position: relative;
  width: 50px;
  height: 50px;
  margin-top: 4px;
  border-radius: 5px;
}
.taskbar .running::after,
.taskbar .active::after,
.taskbar .alert::after {
  content: "";
  position: absolute;
  bottom: 0;
  width: 8px;
  height: 4px;
  border-radius: 2px;
  background: #9a9894;
}
.taskbar .active {
  background: #35332e;
}
.taskbar .active::after {
  width: 20px;
  background: #4cc2ff;
}
.taskbar .alert {
  background: #7f444a;
}
.taskbar .alert::after {
  width: 40px;
  background: #ff99a4;
}
.taskbar em {
  position: absolute;
  top: 3px;
  right: 6px;
  width: 20px;
  height: 20px;
  border-radius: 10px;
  background: #ff99a4;
  color: #1f1f1f;
  font: 15px/20px "Open Sans", sans-serif;
}
.taskbar .alert em {
  top: 5px;
  right: 5px;
  width: 17px;
  height: 17px;
  border: 5px solid #f04747;
  background: #fff;
}
.tray {
  display: flex;
  align-items: center;
  margin: 0 24px 0 auto;
  font-size: 15px;
  line-height: 20px;
}
.mic {
  margin: 0 25px;
}
.lang {
  margin-right: 24px;
  text-align: center;
}
.tray .lang ~ svg {
  margin-right: 10px;
}
.clock {
  width: 80px;
  font-size: 14px;
  text-align: right;
}
```
